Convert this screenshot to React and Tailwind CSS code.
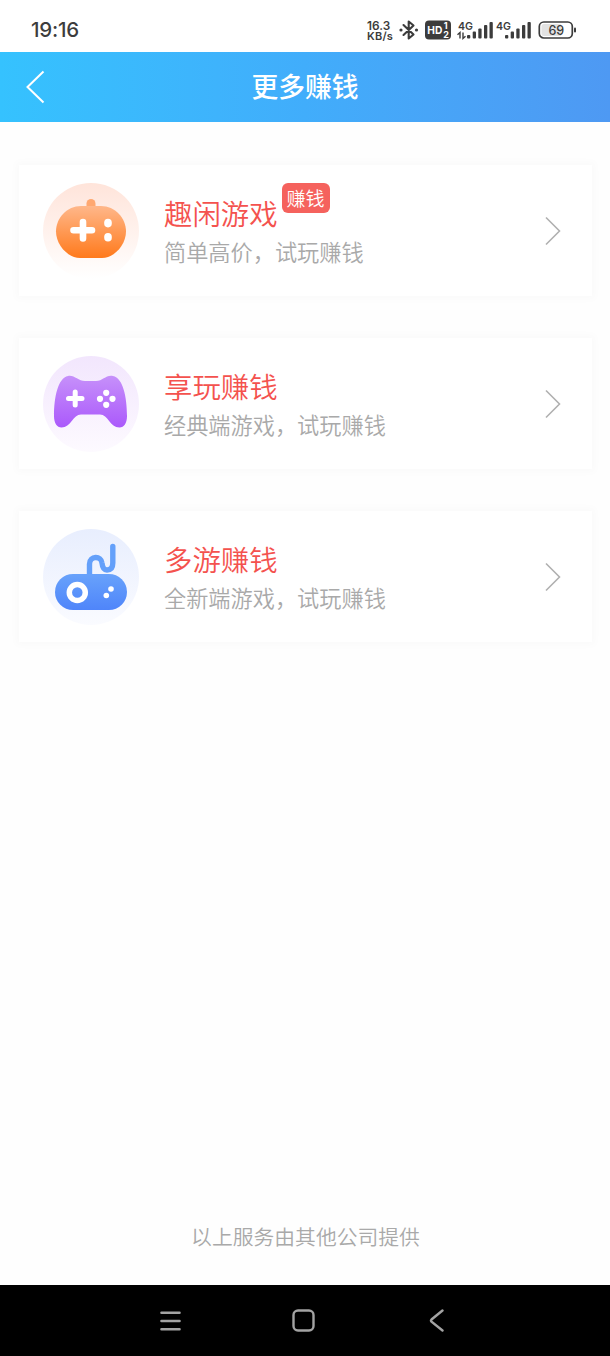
import React from "react";

const services = [
  { id: "quxian", title: "趣闲游戏", desc: "简单高价，试玩赚钱", badge: "赚钱", Icon: PumpkinPadIcon },
  { id: "xiangwan", title: "享玩赚钱", desc: "经典端游戏，试玩赚钱", Icon: GamepadIcon },
  { id: "duoyou", title: "多游赚钱", desc: "全新端游戏，试玩赚钱", Icon: WiredPadIcon },
];

function PumpkinPadIcon() {
  return (
    <svg width="96" height="96" viewBox="0 0 96 96" className="shrink-0">
      <defs>
        <linearGradient id="orangeBg" x1="0" y1="0" x2="0" y2="1">
          <stop offset="0" stopColor="#ffe4da" />
          <stop offset="1" stopColor="#ffffff" />
        </linearGradient>
        <linearGradient id="orangeBody" x1="0" y1="0" x2="0" y2="1">
          <stop offset="0" stopColor="#ffb78a" />
          <stop offset="1" stopColor="#ff7a1c" />
        </linearGradient>
      </defs>
      <circle cx="48" cy="48" r="48" fill="url(#orangeBg)" />
      <path d="M43.5 25V20.5a4.5 4.5 0 0 1 9 0V25Z" fill="#ffa871" />
      <path
        d="M38 23H58C72 23 83 35 83 48.500C83 62 71 75 59 75H37C25 75 13 62 13 48.500C13 35 24 23 38 23Z"
        fill="url(#orangeBody)"
      />
      <path d="M40 39V55.500M30.500 47.200H49" stroke="#fff" strokeWidth="6.600" strokeLinecap="round" />
      <rect x="61.200" y="35.800" width="7.600" height="8.600" rx="3.800" fill="#fff" />
      <rect x="61.200" y="50" width="7.600" height="8.600" rx="3.800" fill="#fff" />
    </svg>
  );
}

function GamepadIcon() {
  return (
    <svg width="96" height="96" viewBox="0 0 96 96" className="shrink-0">
      <defs>
        <linearGradient id="purpleBg" x1="0" y1="0" x2="0" y2="1">
          <stop offset="0" stopColor="#f2e6fd" />
          <stop offset="1" stopColor="#fdfaff" />
        </linearGradient>
        <linearGradient id="purpleBody" x1="0" y1="0" x2="0" y2="1">
          <stop offset="0" stopColor="#c690fa" />
          <stop offset="1" stopColor="#ab59fb" />
        </linearGradient>
      </defs>
      <circle cx="48" cy="48" r="48" fill="url(#purpleBg)" />
      <path
        d="M25 20C31 18.500 35 25 42 25H53C60 25 63 18.500 70 20C80 22 84 41 84 60C84 67 81 71.500 76.500 71.500C67 71.500 65 58.500 57 58.500H38C30 58.500 28 71.500 18.500 71.500C14 71.500 11 67 11 60C11 41 15 22 25 20Z"
        fill="url(#purpleBody)"
      />
      <path d="M32.200 36V49M25.500 42.500H39" stroke="#fff" strokeWidth="5" strokeLinecap="round" />
      <g fill="#fff">
        <circle cx="63.200" cy="36.800" r="3.100" />
        <circle cx="63.200" cy="48.800" r="3.100" />
        <circle cx="57" cy="42.800" r="3.100" />
        <circle cx="69.500" cy="42.800" r="3.100" />
      </g>
    </svg>
  );
}

function WiredPadIcon() {
  return (
    <svg width="96" height="96" viewBox="0 0 96 96" className="shrink-0">
      <defs>
        <linearGradient id="blueBg" x1="0" y1="0" x2="0" y2="1">
          <stop offset="0" stopColor="#e8eefe" />
          <stop offset="1" stopColor="#fafbff" />
        </linearGradient>
        <linearGradient id="blueBody" x1="0" y1="0" x2="0" y2="1">
          <stop offset="0" stopColor="#68a2fb" />
          <stop offset="1" stopColor="#4f85fa" />
        </linearGradient>
      </defs>
      <circle cx="48" cy="48" r="48" fill="url(#blueBg)" />
      <path
        d="M46.500 48V35C46.500 26.500 58.500 26.500 59 34C59.500 39 61.500 41 64 41C68.500 41 69.800 37.500 69.800 34V17.500"
        fill="none"
        stroke="#64a0fa"
        strokeWidth="5.400"
        strokeLinecap="round"
      />
      <rect x="12" y="45" width="72" height="36" rx="18" fill="url(#blueBody)" />
      <circle cx="34.300" cy="63.500" r="8" fill="none" stroke="#fff" strokeWidth="5.500" />
      <circle cx="68" cy="60" r="2.800" fill="#fff" />
      <circle cx="63.300" cy="66.500" r="2.800" fill="#fff" />
    </svg>
  );
}

function Signal({ data }) {
  return (
    <svg width="37" height="24" viewBox="0 0 37 24" fill="#3c3c3c">
      <text x="1" y="11.500" fontSize="11" fontWeight="600" textLength="15" lengthAdjust="spacingAndGlyphs">
        4G
      </text>
      {data && (
        <path d="M3 20.500V14.500L0.500 16.800M6 14.500V20.500L8.500 18.200" fill="none" stroke="#3c3c3c" strokeWidth="1.400" />
      )}
      <rect x="10" y="17" width="3.300" height="3.500" rx="1" />
      <rect x="15.700" y="13.500" width="3.300" height="7" rx="1" />
      <rect x="21.300" y="10.500" width="3.300" height="10" rx="1" />
      <rect x="27" y="7" width="3.300" height="13.500" rx="1" />
      <rect x="32.500" y="4" width="3.300" height="16.500" rx="1" />
    </svg>
  );
}

function StatusBar() {
  return (
    <div className="flex h-[52px] items-center bg-white pt-2 pr-[33px] pl-[31px] font-['Inter','Roboto',sans-serif] text-[#3c3c3c]">
      <span className="text-[20.500px] leading-6 font-medium tracking-[-0.2px]">19:16</span>
      <div className="ml-auto flex h-6 items-center">
        <div className="mr-[4px] flex w-[28px] flex-col pt-px font-semibold whitespace-nowrap">
          <span className="h-[10px] text-[11.800px] leading-[10px]">16.3</span>
          <span className="h-[10px] text-[11px] leading-[11px] tracking-[0.2px]">KB/s</span>
        </div>
        <svg width="20" height="24" viewBox="0 0 20 24" className="mr-[6px]">
          <path
            d="M4.500 7L14.500 16.500L9.700 20.500V3.500L14.500 7.500L4.500 17"
            fill="none"
            stroke="#3c3c3c"
            strokeWidth="2.100"
            strokeLinejoin="round"
            strokeLinecap="round"
          />
          <circle cx="2" cy="12" r="1.600" fill="#3c3c3c" />
          <circle cx="17.500" cy="12" r="1.600" fill="#3c3c3c" />
        </svg>
        <svg width="26" height="24" viewBox="0 0 26 24" className="mr-[6px]" fontWeight="700" fill="#fff">
          <rect x="0" y="2.500" width="26" height="19" rx="4" fill="#3c3c3c" />
          <text x="2.300" y="16" fontSize="11" textLength="15" lengthAdjust="spacingAndGlyphs">HD</text>
          <text x="18.800" y="11.300" fontSize="9">1</text>
          <text x="18.200" y="19.600" fontSize="9">2</text>
        </svg>
        <Signal data />
        <div className="ml-px">
          <Signal />
        </div>
        <svg width="39" height="24" viewBox="0 0 39 24" className="ml-[6px]">
          <rect x="1.300" y="4" width="33" height="16" rx="4.500" fill="#fff" stroke="#3c3c3c" strokeWidth="1.700" />
          <path d="M6 6H23V18H6Q3.500 18 3.500 15.500V8.500Q3.500 6 6 6Z" fill="#e2e2e2" />
          <rect x="36" y="9.500" width="2" height="5" rx="1" fill="#3c3c3c" />
          <text x="10.500" y="16.500" fontSize="12.500" fontWeight="500" fill="#3c3c3c">69</text>
        </svg>
      </div>
    </div>
  );
}

function Header() {
  return (
    <header className="flex h-[70px] items-center bg-linear-to-r from-[#35c2fe] via-[#41adfb] to-[#4e99f3] px-6 text-white">
      <svg width="22" height="36" viewBox="0 0 22 36" fill="none">
        <path d="M19.500 2.500L3.500 18L19.500 33.500" stroke="currentColor" strokeWidth="2" />
      </svg>
      <h1 className="flex-1 pr-[22px] pb-[2px] text-center text-[26.800px] leading-9 font-medium">更多赚钱</h1>
    </header>
  );
}

function ServiceCard({ title, desc, badge, Icon }) {
  return (
    <div className="flex h-[131px] items-center bg-white pr-[30px] pl-6 shadow-[0_0_8px_3px_rgba(0,0,0,0.02)]">
      <Icon />
      <div className="ml-[25px] flex-1">
        <div className="relative w-fit text-[28.400px] leading-10 font-[350] text-[#f4524e]">
          {title}
          {badge && (
            <span className="absolute top-[-10px] left-full ml-[4px] flex h-[30px] w-[48px] items-center justify-center rounded-md bg-[#f5625d] text-[19px] whitespace-nowrap text-white">
              {badge}
            </span>
          )}
        </div>
        <p className="text-[22.200px] leading-9 font-[350] text-[#a9a9a9]">{desc}</p>
      </div>
      <svg width="18" height="30" viewBox="0 0 18 30" fill="none">
        <path d="M2 1.500L15.500 15L2 28.500" stroke="#b0b0b0" strokeWidth="1.600" />
      </svg>
    </div>
  );
}

function NavBar() {
  return (
    <nav className="flex h-[71px] items-center justify-center gap-[109px] bg-black pr-[3px] text-[#a3a3a3]">
      <svg width="24" height="24" viewBox="0 0 24 24" fill="none" stroke="currentColor" strokeWidth="2.600" strokeLinecap="round">
        <path d="M2.500 3.800H20.500M2.500 12H20.500M2.500 20.300H20.500" />
      </svg>
      <svg width="24" height="24" viewBox="0 0 24 24" fill="none" stroke="currentColor" strokeWidth="2.400">
        <rect x="1.500" y="1.500" width="20" height="20" rx="4.500" />
      </svg>
      <svg width="24" height="24" viewBox="0 0 24 24" fill="none" stroke="currentColor" strokeWidth="2.400" strokeLinecap="round">
        <path d="M17.500 1.500L6.500 10.500Q5.500 11.500 6.500 12.700L17.500 21.500" />
      </svg>
    </nav>
  );
}

export default function App() {
  return (
    <div className="flex h-[1356px] w-[610px] flex-col bg-[#fefefe] font-['Noto_Sans_CJK_SC',sans-serif]">
      <StatusBar />
      <Header />
      <main className="flex flex-1 flex-col gap-[42px] pt-[43px] pr-[18px] pl-[19px]">
        {services.map((item) => (
          <ServiceCard key={item.id} {...item} />
        ))}
        <p className="mt-auto pb-[33px] text-center text-[20.800px] leading-8 font-[350] text-[#a9a9a9]">以上服务由其他公司提供</p>
      </main>
      <NavBar />
    </div>
  );
}
